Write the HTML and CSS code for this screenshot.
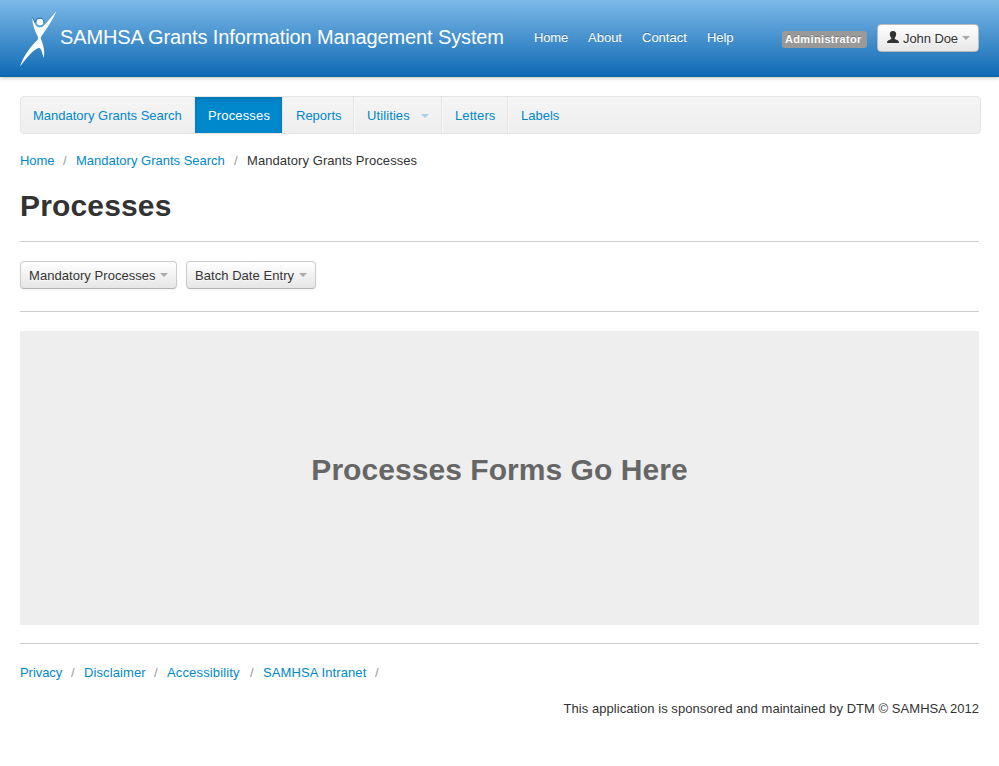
FILE: index.html
```
<!DOCTYPE html>
<html lang="en">
<head>
<meta charset="utf-8">
<title>Processes</title>
<link rel="stylesheet" href="styles.css">
</head>
<body>
<header class="topbar">
  <svg class="logo" width="37" height="56" viewBox="0 0 37 56">
    <path class="logo-shade" d="M12 6 L15 11 Q17 6 21 7 Q24 8 24 12" />
    <circle cx="20" cy="11" r="3.3"/>
    <path d="M36.500 0 C33 8 28 16 25 20 Q22 24 20.500 27 Q22 30 23 34 C24.500 39 24.500 43 23.700 47 C22.500 43 21.500 38 19.500 37 C15 37 8 45 0 55.500 C3 46 10 36 17 29.500 Q18.500 28 18 26 C15 20 12.300 14 12.300 6.300 Q14.500 14.500 18 16 Q22 17 25 13.500 Z"/>
  </svg>
  <div class="brand">SAMHSA Grants Information Management System</div>
  <nav class="toplinks">
    <a class="w-home">Home</a><a class="w-about">About</a><a class="w-contact">Contact</a><a class="w-help">Help</a>
  </nav>
  <div class="user">
    <span class="label">Administrator</span>
    <button class="btn btn-user"><svg class="person" width="12" height="12" viewBox="0 0 12 12"><path d="M6 0C8.300 0 9.300 1.300 9.200 3.200C9 5 8.400 6 7.700 7V8L11 9.500Q12 10 12 12H0Q0 10 1 9.500L4.300 8V7C3.600 6 3 5 2.800 3.200C2.700 1.300 3.700 0 6 0Z"/></svg><span>John Doe</span><i class="caret"></i></button>
  </div>
</header>
<main class="container">
  <nav class="subnav">
    <a class="n-search">Mandatory Grants Search</a><a class="active n-processes">Processes</a><a class="n-reports">Reports</a><a class="n-utilities">Utilities<i class="caret"></i></a><a class="n-letters">Letters</a><a class="n-labels">Labels</a>
  </nav>
  <div class="breadcrumb"><a class="b-home">Home</a><i>/</i><a class="b-search">Mandatory Grants Search</a><i>/</i><span class="b-current">Mandatory Grants Processes</span></div>
  <h1>Processes</h1>
  <div class="toolbar">
    <button class="btn btn-mandatory"><span>Mandatory Processes</span><i class="caret"></i></button>
    <button class="btn btn-batch"><span>Batch Date Entry</span><i class="caret"></i></button>
  </div>
  <section class="forms"><h2>Processes Forms Go Here</h2></section>
  <footer>
    <div class="breadcrumb footlinks"><a class="f-privacy">Privacy</a><i>/</i><a class="f-disclaimer">Disclaimer</a><i>/</i><a class="f-access">Accessibility</a><i>/</i><a class="f-intranet">SAMHSA Intranet</a><i>/</i></div>
    <p class="sponsor">This application is sponsored and maintained by DTM © SAMHSA 2012</p>
  </footer>
</main>
</body>
</html>
```
FILE: styles.css
```
* { box-sizing: border-box; }
body {
  margin: 0;
  background: #fff;
  color: #333;
  font: 13px/18px "Liberation Sans", Arial, sans-serif;
  letter-spacing: .1px;
}
a { color: #08c; text-decoration: none; white-space: nowrap; }
.topbar {
  display: flex;
  height: 77px;
  padding: 0 20px;
  background: linear-gradient(#7db9e8, #0f6ab4);
  border-bottom: 1px solid #0d5f9f;
  box-shadow: 0 1px 4px rgba(0, 0, 0, .25);
}
.logo { margin-top: 11px; fill: #fff; flex: none; }
.logo-shade { fill: none; stroke: #1f6fae; stroke-width: 1; }
.brand {
  width: 464px;
  margin-left: 3px;
  padding-top: 27px;
  color: #fff;
  font-size: 20px;
  line-height: 20px;
  letter-spacing: -.12px;
  white-space: nowrap;
}
.toplinks { display: flex; padding: 29px 0 0 10px; }
.toplinks a { color: #fff; text-shadow: 0 -1px 0 rgba(0, 0, 0, .25); }
.toplinks .w-home { width: 54px; letter-spacing: -.15px; }
.w-about { width: 54px; letter-spacing: 0; }
.w-contact { width: 65px; letter-spacing: 0; }
.w-help { letter-spacing: -.1px; }
.user { display: flex; align-items: flex-start; gap: 10px; margin: 24px 0 0 auto; }
.label {
  width: 85px;
  height: 17px;
  padding-left: 3px;
  margin-top: 7px;
  border-radius: 3px;
  background: #999;
  color: #fff;
  font-size: 11px;
  font-weight: bold;
  line-height: 17px;
  letter-spacing: .35px;
  text-shadow: 0 -1px 0 rgba(0, 0, 0, .25);
}
.btn {
  display: flex;
  align-items: center;
  height: 28px;
  padding: 0 8px;
  border: 1px solid #ccc;
  border-bottom-color: #b3b3b3;
  border-radius: 4px;
  background: linear-gradient(#fff, #e6e6e6);
  box-shadow: inset 0 1px 0 rgba(255, 255, 255, .2), 0 1px 2px rgba(0, 0, 0, .05);
  color: #333;
  font: inherit;
  letter-spacing: .05px;
  white-space: nowrap;
  text-shadow: 0 1px 1px rgba(255, 255, 255, .75);
}
.btn span { padding-top: 2px; }
.caret {
  margin-left: auto;
  border: 4px solid transparent;
  border-top-color: #000;
  border-bottom: 0;
  opacity: .3;
}
.btn-user { width: 102px; border-color: #bbb; letter-spacing: -.08px; }
.person { margin: -3px 4px 0 1px; fill: #333; }
.container { padding: 19px 20px 0; }
.subnav {
  display: flex;
  width: 961px;
  height: 38px;
  border: 1px solid #e5e5e5;
  border-radius: 4px;
  background: linear-gradient(#f5f5f5, #eee);
}
.subnav a {
  display: flex;
  align-items: center;
  padding: 2px 0 0 12px;
  border-left: 1px solid #f8f8f8;
  border-right: 1px solid #e5e5e5;
}
.subnav .n-search { width: 174px; border-left: 0; letter-spacing: 0; }
.subnav .active {
  width: 87px;
  padding-left: 13px;
  border: 0;
  background: #08c;
  box-shadow: inset 0 3px 5px rgba(0, 0, 0, .125);
  color: #fff;
  letter-spacing: .15px;
}
.subnav .n-reports { width: 72px; padding-left: 14px; border-left: 0; box-shadow: inset 1px 0 #e5e5e5; letter-spacing: 0; }
.n-utilities { width: 88px; }
.n-utilities .caret { margin-right: 12px; border-top-color: #08c; }
.n-letters { width: 66px; }
.subnav .n-labels { border-right: 0; letter-spacing: 0; }
.breadcrumb { display: flex; margin-top: 18px; }
.breadcrumb i { width: 22px; padding-left: 9px; color: #999; font-style: normal; }
.b-home { width: 34px; letter-spacing: -.1px; }
.b-search { width: 149px; letter-spacing: 0; }
.b-current { letter-spacing: .07px; }
h1 {
  height: 72px;
  margin: 0;
  padding-top: 18px;
  border-bottom: 1px solid #ccc;
  font-size: 30px;
  line-height: 36px;
  letter-spacing: .15px;
}
.toolbar { display: flex; gap: 9px; height: 70px; padding-top: 19px; border-bottom: 1px solid #ccc; }
.btn-mandatory { width: 157px; }
.btn-batch { width: 130px; }
.forms {
  display: flex;
  height: 294px;
  margin: 19px 0 18px;
  align-items: center;
  justify-content: center;
  background: #eee;
}
h2 { margin: 0; padding-bottom: 16px; color: #666; font-size: 30px; line-height: 36px; letter-spacing: .05px; white-space: nowrap; }
footer { border-top: 1px solid #ccc; }
.footlinks { margin-top: 20px; }
.f-privacy { width: 42px; letter-spacing: -.05px; }
.f-disclaimer { width: 61px; }
.f-access { width: 74px; letter-spacing: .15px; }
.f-intranet { width: 103px; }
.sponsor { margin: 18px 0 0; text-align: right; letter-spacing: .04px; }
```
